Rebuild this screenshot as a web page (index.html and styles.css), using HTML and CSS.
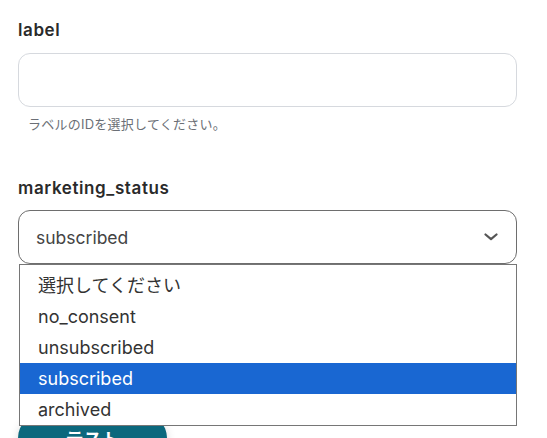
FILE: index.html
```html
<!DOCTYPE html>
<html lang="ja">
<head>
<meta charset="utf-8">
<link rel="stylesheet" href="styles.css">
</head>
<body>
<div class="form">
  <div class="field">
    <div class="field-label">label</div>
    <div class="text-input"></div>
    <div class="help">ラベルのIDを選択してください。</div>
  </div>
  <div class="field field-status">
    <div class="field-label">marketing_status</div>
    <div class="select-wrap">
      <div class="select">
        <span class="select-value">subscribed</span>
        <svg class="chevron" width="14" height="8" viewBox="0 0 14 8"><path d="M1.5 1.5 L7 6.2 L12.5 1.5" fill="none" stroke="#555" stroke-width="2.2" stroke-linecap="round" stroke-linejoin="round"/></svg>
      </div>
      <ul class="options">
        <li class="option">選択してください</li>
        <li class="option">no_consent</li>
        <li class="option">unsubscribed</li>
        <li class="option selected">subscribed</li>
        <li class="option">archived</li>
      </ul>
    </div>
  </div>
  <button class="btn">テスト</button>
</div>
</body>
</html>
```
FILE: styles.css
```css
* { box-sizing: border-box; }
html, body { margin: 0; padding: 0; background: #fff; }
body {
  font-family: Inter, "Noto Sans CJK JP", sans-serif;
  width: 547px;
  height: 438px;
  overflow: hidden;
}
.form {
  padding: 18px 30px 0 18px;
  display: flex;
  flex-direction: column;
}
.field-label {
  font-size: 17px;
  letter-spacing: 0.6px;
  line-height: 24px;
  font-weight: 600;
  color: #2a2a2a;
}
.text-input {
  margin-top: 11px;
  height: 54px;
  border: 1px solid #d6d9de;
  border-radius: 12px;
  background: #fff;
}
.help {
  margin-top: 8px;
  padding-left: 10px;
  font-size: 13px;
  letter-spacing: 0.25px;
  line-height: 18px;
  color: #6b6f76;
}
.field-status { margin-top: 43px; }
.select-wrap { position: relative; margin-top: 10px; }
.select {
  height: 54px;
  border: 1px solid #6e6e6e;
  border-radius: 12px;
  display: flex;
  align-items: center;
  justify-content: space-between;
  padding: 0 18px 0 17px;
  font-size: 17.5px;
  color: #444;
}
.chevron { display: block; }
.options {
  position: absolute;
  left: 1px;
  right: 0;
  top: 54px;
  margin: 0;
  padding: 5px 0 0;
  list-style: none;
  border: 1px solid #767676;
  background: #fff;
  z-index: 2;
}
.option {
  height: 31px;
  line-height: 31px;
  padding-left: 18px;
  font-size: 18px;
  color: #333;
}
.option.selected { background: #1967d2; color: #fff; }
.btn {
  margin-top: 150px;
  width: 149px;
  height: 48px;
  border: none;
  border-radius: 24px;
  background: #0b687d;
  color: #fff;
  font-family: inherit;
  font-size: 18px;
  font-weight: 700;
  box-shadow: 0 2px 10px rgba(0,0,0,0.15);
}
```
